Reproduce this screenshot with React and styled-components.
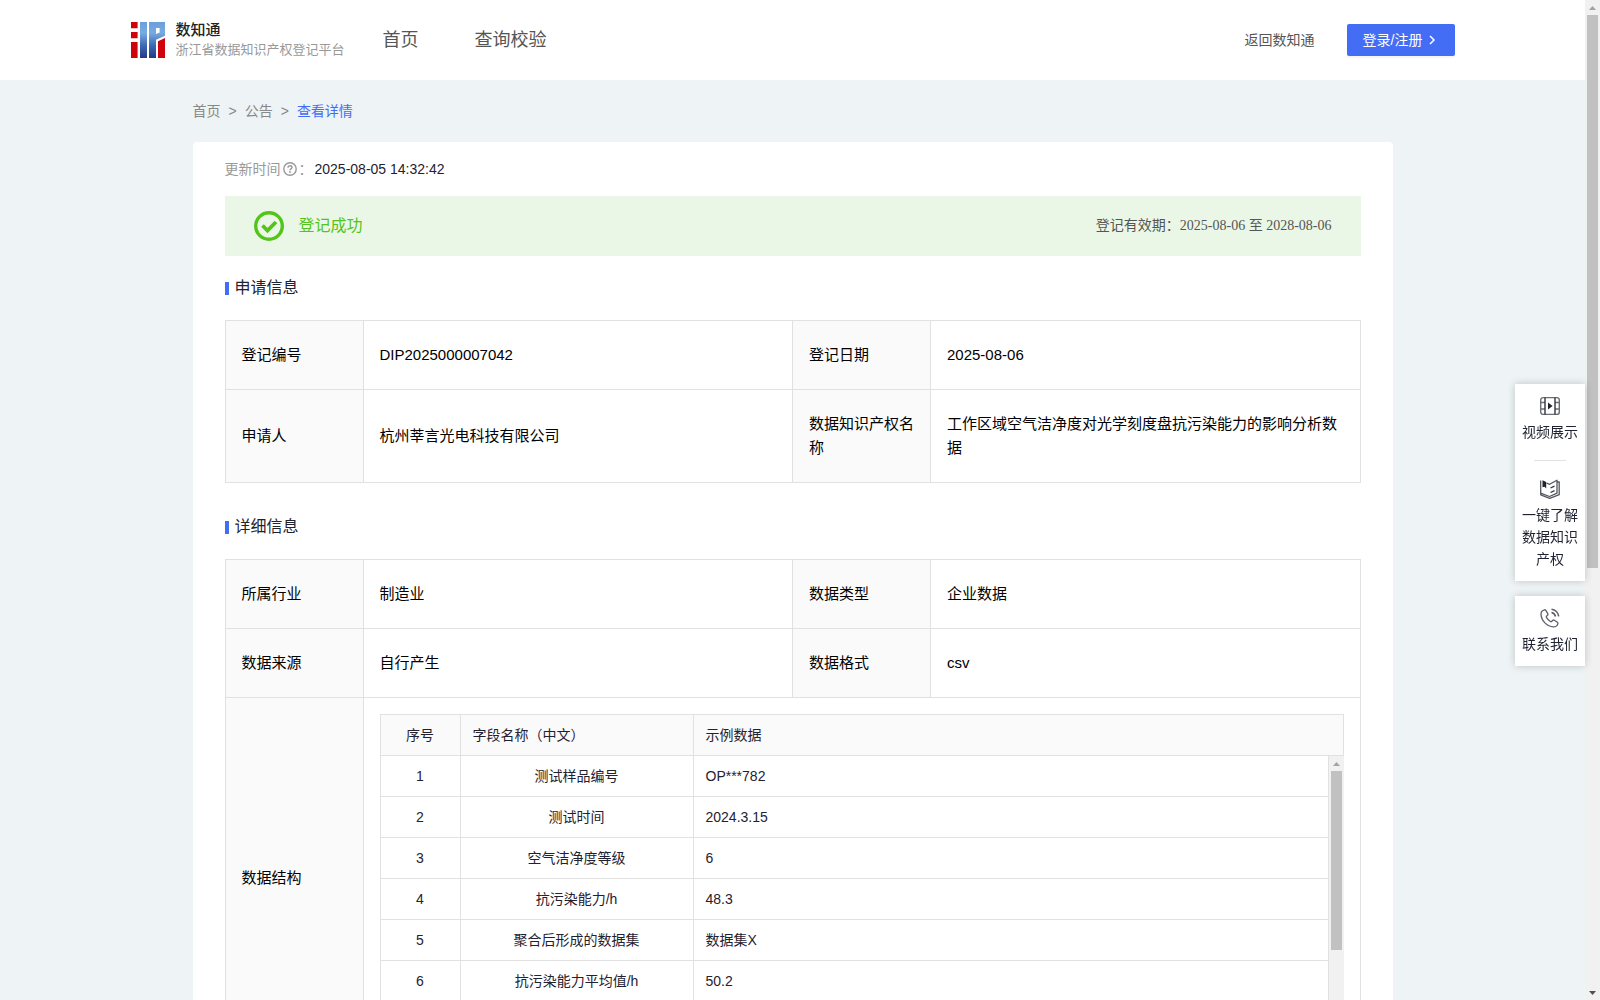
import styled, { createGlobalStyle } from "styled-components";

const GlobalStyle = createGlobalStyle`
  * {
    box-sizing: border-box;
  }

  body {
    margin: 0;
    font-family: "Liberation Sans", "Noto Sans CJK SC", sans-serif;
    font-size: 14px;
    line-height: 22px;
    color: #1f2230;
    background: #eef3f6;
  }

  a {
    color: inherit;
    text-decoration: none;
  }
`;

const Shell = styled.div`
  display: flex;
  height: 100vh;
`;

const Page = styled.div`
  flex: 1;
  min-width: 0;
  overflow-y: auto;
  scrollbar-width: none;
`;

const Header = styled.header`
  background: #fff;
`;

const HeaderInner = styled.div`
  display: flex;
  align-items: center;
  max-width: 1324px;
  height: 80px;
  margin: 0 auto;
`;

const Brand = styled.a`
  display: flex;
  align-items: center;
  gap: 11px;
`;

const BrandText = styled.div`
  display: flex;
  flex-direction: column;
`;

const BrandName = styled.strong`
  font-size: 15px;
  line-height: 20px;
  font-weight: 500;
  color: #222;
`;

const BrandSub = styled.span`
  font-size: 13px;
  line-height: 20px;
  color: #999;
`;

const Nav = styled.nav`
  display: flex;
  flex: 1;
  gap: 56px;
  margin-left: 38px;
  font-size: 18px;
  color: #555;
`;

const BackLink = styled.a`
  margin-right: 32px;
  color: #555;
`;

const LoginButton = styled.button`
  display: flex;
  align-items: center;
  gap: 2px;
  height: 32px;
  padding: 0 16px;
  border: 0;
  border-radius: 2px;
  font: inherit;
  color: #fff;
  background: #446df6;
  box-shadow: 0 2px 0 rgba(0, 0, 0, 0.04);
  cursor: pointer;
`;

const Content = styled.main`
  max-width: 1200px;
  margin: 0 auto;
`;

const Breadcrumb = styled.nav`
  display: flex;
  gap: 8px;
  padding: 20px 0;
  color: #888;
`;

const Crumb = styled.a`
  color: ${(props) => (props.$active ? "#446df6" : "#888")};
`;

const Card = styled.section`
  padding: 16px 32px 32px;
  border-radius: 4px;
  background: #fff;
`;

const Updated = styled.div`
  display: flex;
  align-items: center;
  gap: 2px;
  color: #999;

  time {
    color: #1f2230;
  }
`;

const Banner = styled.div`
  display: flex;
  align-items: center;
  gap: 15px;
  height: 60px;
  margin-top: 16px;
  padding: 0 29px;
  background: #ebf7e6;
`;

const BannerStatus = styled.span`
  flex: 1;
  font-size: 16px;
  color: #52c41a;
`;

const BannerPeriod = styled.span`
  font-family: "Liberation Serif", "Noto Sans CJK SC", serif;
  color: #555;
`;

const Section = styled.section`
  margin-bottom: 12px;
`;

const SectionTitle = styled.h2`
  display: flex;
  align-items: center;
  gap: 6px;
  margin: 0;
  padding: 20px 0;
  font-size: 16px;
  line-height: 24px;
  font-weight: 400;

  &::before {
    content: "";
    width: 4px;
    height: 13px;
    background: #446df6;
  }
`;

const InfoTable = styled.table`
  width: 100%;
  table-layout: fixed;
  border-collapse: separate;
  border-spacing: 0;
  border: 1px solid #e1e1e1;
  border-width: 1px 0 0 1px;
  font-size: 15px;
  line-height: 24px;
  color: #000;
`;

const LabelCol = styled.col`
  width: 138px;
`;

const InfoLabel = styled.th`
  padding: 22px 16px;
  border: 1px solid #e1e1e1;
  border-width: 0 1px 1px 0;
  font-weight: 400;
  text-align: left;
  background: #fafafa;
`;

const InfoValue = styled.td`
  padding: 22px 16px;
  border: 1px solid #e1e1e1;
  border-width: 0 1px 1px 0;
`;

const NestedCell = styled(InfoValue)`
  padding: 16px;
`;

const FieldTable = styled.table`
  width: 100%;
  table-layout: fixed;
  border-collapse: separate;
  border-spacing: 0;
  border-left: 1px solid #e1e1e1;
  border-top: ${(props) => (props.$head ? "1px solid #e1e1e1" : "0")};
  font-size: 14px;
  line-height: 22px;
  color: #1f2230;
`;

const IndexCol = styled.col`
  width: 80px;
`;

const NameCol = styled.col`
  width: 233px;
`;

const FieldHead = styled.th`
  padding: 9px 12px;
  border: 1px solid #e1e1e1;
  border-width: 0 1px 1px 0;
  font-weight: 400;
  text-align: ${(props) => props.$align || "left"};
  background: #fafafa;
`;

const FieldCell = styled.td`
  padding: 9px 12px;
  border: 1px solid #e1e1e1;
  border-width: 0 1px 1px 0;
  text-align: ${(props) => props.$align || "left"};
`;

const FieldBody = styled.div`
  display: flex;
  align-items: stretch;
  height: 286px;
`;

const FieldRows = styled.div`
  flex: 1;
  min-width: 0;
  overflow: hidden;
`;

const Track = styled.div`
  display: flex;
  flex-direction: column;
  align-items: center;
  width: 15px;
  flex: none;
  background: #f1f1f1;
`;

const Arrow = styled.span`
  display: flex;
  align-items: center;
  justify-content: center;
  height: 15px;
  color: ${(props) => (props.$muted ? "#a3a3a3" : "#505050")};
`;

const Rail = styled.div`
  flex: 1;
  width: 11px;
`;

const Thumb = styled.div`
  height: ${(props) => props.$size};
  background: #c1c1c1;
`;

const SideTools = styled.aside`
  position: fixed;
  top: 384px;
  right: 15px;
  display: flex;
  flex-direction: column;
  gap: 15px;
  width: 70px;
`;

const ToolGroup = styled.div`
  display: flex;
  flex-direction: column;
  align-items: center;
  padding: 12px 6px 11px;
  background: #fff;
  box-shadow: 0 0 8px rgba(0, 0, 0, 0.2);
`;

const ToolLink = styled.a`
  display: flex;
  flex-direction: column;
  align-items: center;
  gap: 5px;
  text-align: center;
`;

const ToolDivider = styled.hr`
  width: 32px;
  margin: 17px 0 18px;
  border: 0;
  border-top: 1px solid #e1e1e1;
`;

const fields = [
  { name: "测试样品编号", sample: "OP***782" },
  { name: "测试时间", sample: "2024.3.15" },
  { name: "空气洁净度等级", sample: "6" },
  { name: "抗污染能力/h", sample: "48.3" },
  { name: "聚合后形成的数据集", sample: "数据集X" },
  { name: "抗污染能力平均值/h", sample: "50.2" },
];

const application = [
  ["登记编号", "DIP2025000007042", "登记日期", "2025-08-06"],
  [
    "申请人",
    "杭州莘言光电科技有限公司",
    "数据知识产权名称",
    "工作区域空气洁净度对光学刻度盘抗污染能力的影响分析数据",
  ],
];

const details = [
  ["所属行业", "制造业", "数据类型", "企业数据"],
  ["数据来源", "自行产生", "数据格式", "csv"],
];

const Logo = () => (
  <svg width="34" height="36" viewBox="0 0 34 36" aria-hidden="true">
    <defs>
      <linearGradient id="logoBlue" x1="0" y1="0" x2="0" y2="36" gradientUnits="userSpaceOnUse">
        <stop offset="0" stopColor="#6b9fda" />
        <stop offset="0.3" stopColor="#78abe2" />
        <stop offset="0.65" stopColor="#3f69b4" />
        <stop offset="1" stopColor="#223a84" />
      </linearGradient>
    </defs>
    <g fill="#d0020b">
      <path d="M0 0h6.6v6.2H0zM0 10h6.6v6.2H0zM0 20h6.6v16H0z" />
      <path d="M27 19.2l7-3.2V36h-7z" />
    </g>
    <path
      fill="url(#logoBlue)"
      fillRule="evenodd"
      d="M9 0h7v36H9zM18 0h16v13.8l-9 4V36h-7zM25 6v6l3.6-1.6V6z"
    />
  </svg>
);

const ChevronIcon = () => (
  <svg width="14" height="14" viewBox="0 0 14 14" fill="none" aria-hidden="true">
    <path d="M5 3l4 4-4 4" stroke="currentColor" strokeWidth="1.5" />
  </svg>
);

const QuestionIcon = () => (
  <svg width="14" height="14" viewBox="0 0 14 14" fill="none" aria-hidden="true">
    <circle cx="7" cy="7" r="6.2" stroke="currentColor" strokeWidth="1.4" />
    <path
      d="M5 5.7C5 4.5 5.9 3.8 7 3.8s2 .7 2 1.7c0 1.3-2 1.4-2 2.7"
      stroke="currentColor"
      strokeWidth="1.4"
    />
    <circle cx="7" cy="10" r=".9" fill="currentColor" />
  </svg>
);

const SuccessIcon = () => (
  <svg width="30" height="30" viewBox="0 0 30 30" fill="none" aria-hidden="true">
    <circle cx="15" cy="15" r="13.3" stroke="#52c41a" strokeWidth="3.4" />
    <path d="M8.5 14.5l5 5 8.500-8.500" stroke="#52c41a" strokeWidth="3.8" />
  </svg>
);

const VideoIcon = () => (
  <svg width="20" height="20" viewBox="0 0 20 20" fill="none" aria-hidden="true">
    <rect x="0.7" y="1.6" width="18.6" height="16.8" rx="2.500" stroke="#6c6e76" strokeWidth="1.4" />
    <path d="M.7 6.500H5M.7 13H5M15 6.500h4.300M15 13h4.300" stroke="#6c6e76" strokeWidth="1.4" />
    <path d="M5 1.600v16.800M15 1.600v16.800" stroke="#33353f" strokeWidth="1.4" />
    <path d="M8 6.600l4.600 3.400L8 13.400z" fill="#1f2230" />
  </svg>
);

const BookIcon = () => (
  <svg width="20" height="20" viewBox="0 0 20 20" fill="none" stroke="#55575f" aria-hidden="true">
    <path
      d="M.7 1.500v12.700L9.500 17.500l7.500-3.300V1.200L9.500 5.300 6.500 4M17 3h2.200v12.700L9.700 19.300.7 15.800V13"
      strokeWidth="1.3"
      strokeLinejoin="round"
    />
    <path d="M2.500 1.300L6.200 3v6.500L4.500 7.800 2.500 8.300z" fill="#1f2230" stroke="none" />
    <path d="M10.500 9l4-1.900M10.500 13.500l4-1.900" stroke="#33353f" strokeWidth="1.3" />
  </svg>
);

const PhoneIcon = () => (
  <svg width="20" height="20" viewBox="0 0 20 20" fill="none" stroke="#5d5f67" aria-hidden="true">
    <path
      d="M4.6 1.800C2.500 2.300.9 4 1 6.400c.3 6.400 6 12.100 12.400 12.500 2.200.1 3.900-1.300 4.500-3.300.2-.6 0-1-.5-1.400l-3-2c-.5-.3-1-.3-1.500.1l-1.300 1.200c-.4.3-.8.3-1.200 0-1.700-1-3-2.400-4-4.100-.2-.4-.2-.8.1-1.100l1.200-1.300c.4-.4.4-.9.1-1.400l-2-3.200c-.3-.5-.7-.7-1.200-.6z"
      strokeWidth="1.3"
    />
    <path d="M11.500 4.500c2 .4 3.600 2 4 4M11.500 1.300c3.700.4 6.700 3.300 7.200 7" strokeWidth="1.6" />
  </svg>
);

const ArrowIcon = ({ down }) => (
  <svg width="7" height="4" viewBox="0 0 7 4" fill="currentColor" aria-hidden="true">
    <path d={down ? "M0 0h7L3.5 4z" : "M0 4h7L3.5 0z"} />
  </svg>
);

const Scrollbar = ({ size }) => (
  <Track aria-hidden="true">
    <Arrow $muted>
      <ArrowIcon />
    </Arrow>
    <Rail>
      <Thumb $size={size} />
    </Rail>
    <Arrow>
      <ArrowIcon down />
    </Arrow>
  </Track>
);

const InfoCols = () => (
  <colgroup>
    <LabelCol />
    <col />
    <LabelCol />
    <col />
  </colgroup>
);

const InfoRows = ({ rows }) =>
  rows.map(([label, value, label2, value2]) => (
    <tr key={label}>
      <InfoLabel scope="row">{label}</InfoLabel>
      <InfoValue>{value}</InfoValue>
      <InfoLabel scope="row">{label2}</InfoLabel>
      <InfoValue>{value2}</InfoValue>
    </tr>
  ));

const FieldCols = () => (
  <colgroup>
    <IndexCol />
    <NameCol />
    <col />
  </colgroup>
);

const DataStructure = () => (
  <>
    <FieldTable $head>
      <FieldCols />
      <thead>
        <tr>
          <FieldHead $align="center">序号</FieldHead>
          <FieldHead>字段名称（中文）</FieldHead>
          <FieldHead>示例数据</FieldHead>
        </tr>
      </thead>
    </FieldTable>
    <FieldBody>
      <FieldRows>
        <FieldTable>
          <FieldCols />
          <tbody>
            {fields.map((field, index) => (
              <tr key={field.name}>
                <FieldCell $align="center">{index + 1}</FieldCell>
                <FieldCell $align="center">{field.name}</FieldCell>
                <FieldCell>{field.sample}</FieldCell>
              </tr>
            ))}
          </tbody>
        </FieldTable>
      </FieldRows>
      <Scrollbar size="70%" />
    </FieldBody>
  </>
);

export default function App() {
  return (
    <>
      <GlobalStyle />
      <Shell>
        <Page>
          <Header>
            <HeaderInner>
              <Brand href="#">
                <Logo />
                <BrandText>
                  <BrandName>数知通</BrandName>
                  <BrandSub>浙江省数据知识产权登记平台</BrandSub>
                </BrandText>
              </Brand>
              <Nav>
                <a href="#">首页</a>
                <a href="#">查询校验</a>
              </Nav>
              <BackLink href="#">返回数知通</BackLink>
              <LoginButton type="button">
                登录/注册
                <ChevronIcon />
              </LoginButton>
            </HeaderInner>
          </Header>

          <Content>
            <Breadcrumb>
              <Crumb href="#">首页</Crumb>
              <span>&gt;</span>
              <Crumb href="#">公告</Crumb>
              <span>&gt;</span>
              <Crumb href="#" $active>
                查看详情
              </Crumb>
            </Breadcrumb>

            <Card>
              <Updated>
                更新时间
                <QuestionIcon />
                <span>：</span>
                <time>2025-08-05 14:32:42</time>
              </Updated>

              <Banner>
                <SuccessIcon />
                <BannerStatus>登记成功</BannerStatus>
                <BannerPeriod>登记有效期：2025-08-06 至 2028-08-06</BannerPeriod>
              </Banner>

              <Section>
                <SectionTitle>申请信息</SectionTitle>
                <InfoTable>
                  <InfoCols />
                  <tbody>
                    <InfoRows rows={application} />
                  </tbody>
                </InfoTable>
              </Section>

              <Section>
                <SectionTitle>详细信息</SectionTitle>
                <InfoTable>
                  <InfoCols />
                  <tbody>
                    <InfoRows rows={details} />
                    <tr>
                      <InfoLabel scope="row">数据结构</InfoLabel>
                      <NestedCell colSpan={3}>
                        <DataStructure />
                      </NestedCell>
                    </tr>
                  </tbody>
                </InfoTable>
              </Section>
            </Card>
          </Content>
        </Page>
        <Scrollbar size="57%" />
      </Shell>

      <SideTools>
        <ToolGroup>
          <ToolLink href="#">
            <VideoIcon />
            视频展示
          </ToolLink>
          <ToolDivider />
          <ToolLink href="#">
            <BookIcon />
            一键了解数据知识产权
          </ToolLink>
        </ToolGroup>
        <ToolGroup>
          <ToolLink href="#">
            <PhoneIcon />
            联系我们
          </ToolLink>
        </ToolGroup>
      </SideTools>
    </>
  );
}
